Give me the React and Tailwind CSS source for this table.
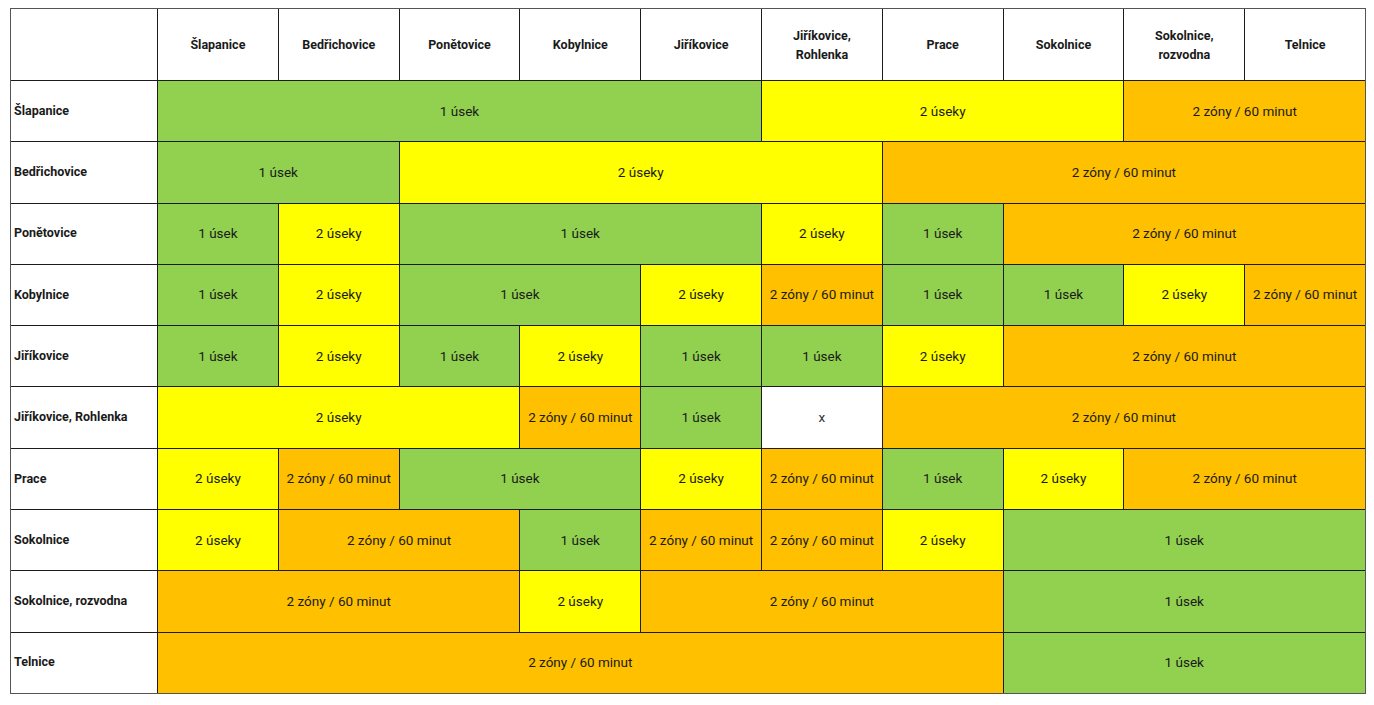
import React from "react";

const G = "g", Y = "y", O = "o", W = "w";
const txt = { g: "1 úsek", y: "2 úseky", o: "2 zóny / 60 minut", w: "x" };
const bg = { g: "bg-[#92d050]", y: "bg-[#ffff00]", o: "bg-[#ffc000]", w: "bg-white" };

const headers = [
  "Šlapanice", "Bedřichovice", "Ponětovice", "Kobylnice", "Jiříkovice",
  "Jiříkovice,\nRohlenka", "Prace", "Sokolnice", "Sokolnice,\nrozvodna", "Telnice",
];

const rows = [
  ["Šlapanice", [[G, 5], [Y, 3], [O, 2]]],
  ["Bedřichovice", [[G, 2], [Y, 4], [O, 4]]],
  ["Ponětovice", [[G, 1], [Y, 1], [G, 3], [Y, 1], [G, 1], [O, 3]]],
  ["Kobylnice", [[G, 1], [Y, 1], [G, 2], [Y, 1], [O, 1], [G, 1], [G, 1], [Y, 1], [O, 1]]],
  ["Jiříkovice", [[G, 1], [Y, 1], [G, 1], [Y, 1], [G, 1], [G, 1], [Y, 1], [O, 3]]],
  ["Jiříkovice, Rohlenka", [[Y, 3], [O, 1], [G, 1], [W, 1], [O, 4]]],
  ["Prace", [[Y, 1], [O, 1], [G, 2], [Y, 1], [O, 1], [G, 1], [Y, 1], [O, 2]]],
  ["Sokolnice", [[Y, 1], [O, 2], [G, 1], [O, 1], [O, 1], [Y, 1], [G, 3]]],
  ["Sokolnice, rozvodna", [[O, 3], [Y, 1], [O, 3], [G, 3]]],
  ["Telnice", [[O, 7], [G, 3]]],
];

const span = {
  1: "col-span-1", 2: "col-span-2", 3: "col-span-3", 4: "col-span-4", 5: "col-span-5",
  6: "col-span-6", 7: "col-span-7", 8: "col-span-8", 9: "col-span-9", 10: "col-span-10",
};

export default function App() {
  return (
    <div className="w-[1374px] h-[705px] bg-white pt-[8px] pl-[10px]" style={{ fontFamily: "Roboto, 'Liberation Sans', sans-serif" }}>
      <div className="grid grid-cols-[146px_repeat(10,119.8px)] grid-rows-[71px_repeat(10,60.3px)] gap-px bg-[#1c1c1c] border border-[#555] w-max text-[13.5px] text-[#1a1a1a]">
        <div className="bg-white" />
        {headers.map((h) => (
          <div key={h} className="bg-white flex items-center justify-center text-center font-bold whitespace-pre-line leading-[19px] text-[12.5px]">
            {h}
          </div>
        ))}
        {rows.map(([label, cells]) => (
          <React.Fragment key={label}>
            <div className="bg-white flex items-center pl-[3px] font-bold text-[12.5px]">{label}</div>
            {cells.map(([c, n], i) => (
              <div key={i} className={`${bg[c]} ${span[n]} flex items-center justify-center pb-[1px] ${c === W ? "text-[#333]" : ""}`}>
                {txt[c]}
              </div>
            ))}
          </React.Fragment>
        ))}
      </div>
    </div>
  );
}
